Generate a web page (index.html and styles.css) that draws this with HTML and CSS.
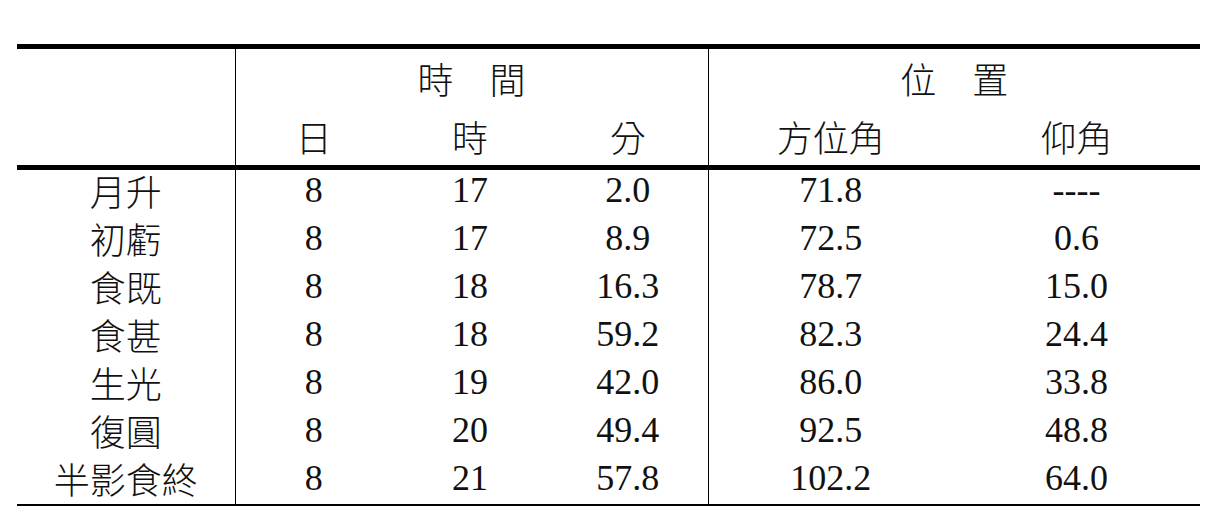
FILE: index.html
```html
<!DOCTYPE html>
<html lang="zh-Hant">
<head>
<meta charset="utf-8">
<title>月食時間位置</title>
<link rel="stylesheet" href="styles.css">
</head>
<body>
<table class="eclipse">
  <colgroup>
    <col class="c-label">
    <col class="c-day">
    <col class="c-hour">
    <col class="c-min">
    <col class="c-az">
    <col class="c-alt">
  </colgroup>
  <thead>
    <tr class="head-top">
      <th class="label sep corner" rowspan="2"></th>
      <th class="sep" colspan="3">時　間</th>
      <th colspan="2">位　置</th>
    </tr>
    <tr class="head-sub">
      <th>日</th>
      <th>時</th>
      <th class="sep">分</th>
      <th>方位角</th>
      <th>仰角</th>
    </tr>
  </thead>
  <tbody>
    <tr><td class="label sep">月升</td><td>8</td><td>17</td><td class="sep">2.0</td><td>71.8</td><td>----</td></tr>
    <tr><td class="label sep">初虧</td><td>8</td><td>17</td><td class="sep">8.9</td><td>72.5</td><td>0.6</td></tr>
    <tr><td class="label sep">食既</td><td>8</td><td>18</td><td class="sep">16.3</td><td>78.7</td><td>15.0</td></tr>
    <tr><td class="label sep">食甚</td><td>8</td><td>18</td><td class="sep">59.2</td><td>82.3</td><td>24.4</td></tr>
    <tr><td class="label sep">生光</td><td>8</td><td>19</td><td class="sep">42.0</td><td>86.0</td><td>33.8</td></tr>
    <tr><td class="label sep">復圓</td><td>8</td><td>20</td><td class="sep">49.4</td><td>92.5</td><td>48.8</td></tr>
    <tr class="last"><td class="label sep">半影食終</td><td>8</td><td>21</td><td class="sep">57.8</td><td>102.2</td><td>64.0</td></tr>
  </tbody>
</table>
</body>
</html>
```

FILE: styles.css
```css
html, body {
  margin: 0;
  background: #ffffff;
}

body {
  padding: 44px 0 0 17px;
  font-family: "Liberation Serif", "Noto Sans CJK TC", serif;
  font-size: 36px;
  color: #111111;
}

.eclipse {
  border-collapse: collapse;
  table-layout: fixed;
  width: 1183px;
  border-top: 5px solid #000;
}

.c-label { width: 218px; }
.c-day { width: 157px; }
.c-hour { width: 156px; }
.c-min { width: 160px; }
.c-az { width: 245px; }
.c-alt { width: 247px; }

.eclipse th,
.eclipse td {
  padding: 0;
  text-align: center;
  font-weight: normal;
  white-space: nowrap;
}

.eclipse th {
  font-family: "Noto Sans CJK TC", "Liberation Serif", sans-serif;
  font-weight: 300;
  height: 58px;
  line-height: 58px;
}

.head-sub th,
.eclipse th.corner {
  border-bottom: 5px solid #000;
}

.eclipse td {
  height: 40px;
  line-height: 40px;
  padding-bottom: 8px;
}

.eclipse td.label {
  font-family: "Noto Sans CJK TC", "Liberation Serif", sans-serif;
  font-weight: 300;
}

.sep {
  border-right: 1px solid #000;
}

.last td {
  border-bottom: 2px solid #000;
  padding-bottom: 6px;
}
```
